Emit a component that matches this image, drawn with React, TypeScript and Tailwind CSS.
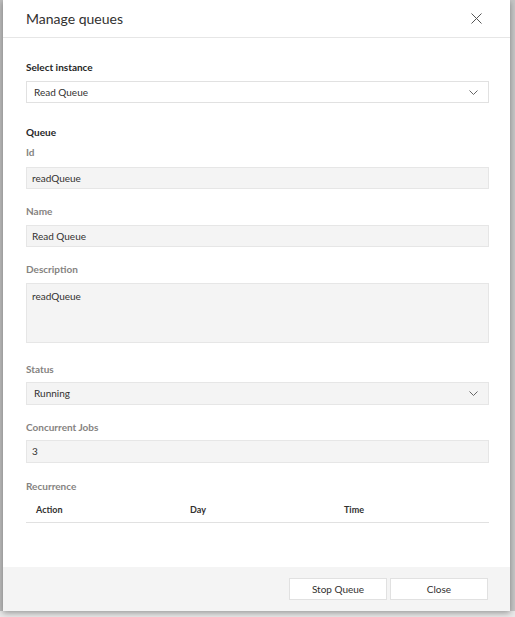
import React from "react";

const font = { fontFamily: 'Lato, "Open Sans", Arial, sans-serif' };

function Chevron() {
  return (
    <svg width="9" height="5" viewBox="0 0 9 5" fill="none">
      <path d="M0.5 0.5 L4.5 4.5 L8.5 0.5" stroke="#666" strokeWidth="1" />
    </svg>
  );
}

function Label({ children, dark = false, mt }: { children: React.ReactNode; dark?: boolean; mt: string }) {
  return (
    <div
      className={`${mt} h-[16px] leading-[16px] text-[10px] font-bold ${dark ? "text-[#262626]" : "text-[#858381]"}`}
    >
      {children}
    </div>
  );
}

export default function App() {
  return (
    <div style={font} className="relative h-[617px] w-[515px] overflow-hidden bg-[#e9e9e9]">
      <div className="absolute left-0 top-0 h-[611px] w-[3px] bg-[#bdbdbd]" />
      <div className="absolute right-0 top-0 h-[611px] w-[5px] bg-[#c6c6c6]" />
      <div className="relative ml-[3px] flex h-[611px] w-[507px] flex-col bg-white shadow-[0_2px_6px_rgba(0,0,0,0.35)]">
        <div className="flex h-[38px] shrink-0 items-center justify-between border-b border-[#e6e6e6] pl-[23px] pr-[28px]">
          <span className="pt-[1px] text-[14px] leading-none text-[#323130]">Manage queues</span>
          <svg width="11" height="11" viewBox="0 0 11 11" fill="none">
            <path d="M0.5 0.5 L10.5 10.5 M10.5 0.5 L0.5 10.5" stroke="#555" strokeWidth="1" />
          </svg>
        </div>
        <div className="flex flex-1 flex-col pl-[23px] pr-[21px]">
          <Label dark mt="mt-[21px]">Select instance</Label>
          <div className="mt-[6px] flex h-[22px] items-center justify-between border border-[#e1e1e1] bg-white pl-[7px] pr-[10px] text-[10px] text-[#323130]">
            <span>Read Queue</span>
            <Chevron />
          </div>
          <Label dark mt="mt-[21px]">Queue</Label>
          <Label mt="mt-[4px]">Id</Label>
          <div className="mt-[7px] flex h-[22px] items-center border border-[#e6e6e6] bg-[#f4f4f4] pl-[5px] text-[10px] text-[#323130]">
            readQueue
          </div>
          <Label mt="mt-[14px]">Name</Label>
          <div className="mt-[6px] flex h-[22px] items-center border border-[#e6e6e6] bg-[#f4f4f4] pl-[5px] text-[10px] text-[#323130]">
            Read Queue
          </div>
          <Label mt="mt-[14px]">Description</Label>
          <div className="mt-[6px] h-[60px] border border-[#e6e6e6] bg-[#f4f4f4] pl-[5px] pt-[5px] text-[10px] leading-[14px] text-[#323130]">
            readQueue
          </div>
          <Label mt="mt-[18px]">Status</Label>
          <div className="mt-[5px] flex h-[23px] items-center justify-between border border-[#e6e6e6] bg-[#f4f4f4] pl-[7px] pr-[10px] text-[10px] text-[#323130]">
            <span>Running</span>
            <Chevron />
          </div>
          <Label mt="mt-[14px]">Concurrent Jobs</Label>
          <div className="mt-[5px] flex h-[23px] items-center border border-[#e6e6e6] bg-[#f4f4f4] pl-[5px] text-[10px] text-[#323130]">
            3
          </div>
          <Label mt="mt-[15px]">Recurrence</Label>
          <div className="mt-[4px] grid h-[25px] grid-cols-[154px_154px_1fr] items-center border-b border-[#e1e1e1] pl-[10px] text-[9px] font-bold text-[#323130]">
            <span>Action</span>
            <span>Day</span>
            <span>Time</span>
          </div>
        </div>
        <div className="flex h-[44px] shrink-0 items-start justify-end gap-[3px] bg-[#f4f4f4] pr-[22px] pt-[11px]">
          <button className="h-[22px] w-[98px] border border-[#e1e1e1] bg-white text-[10px] text-[#323130]">Stop Queue</button>
          <button className="h-[22px] w-[98px] border border-[#e1e1e1] bg-white text-[10px] text-[#323130]">Close</button>
        </div>
      </div>
    </div>
  );
}
